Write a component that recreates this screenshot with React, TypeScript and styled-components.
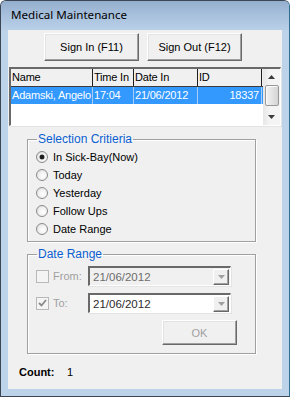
import styled, { createGlobalStyle } from 'styled-components';

const GlobalStyle = createGlobalStyle`
  html, body {
    margin: 0;
    padding: 0;
    background: #ffffff;
  }
  body {
    font-family: 'Liberation Sans', Arial, sans-serif;
    font-size: 11px;
    color: #000;
  }
`;

const WIN = {
  face: '#f0f0f0',
  frame: '#bcd3ea',
  shadow: '#a0a0a0',
  dark: '#696969',
  light: '#ffffff',
  selected: '#3399ff',
  groupText: '#0b5fd0',
  disabled: '#a0a0a0',
};

const Window = styled.div`
  width: 290px;
  height: 397px;
  box-sizing: border-box;
  display: flex;
  flex-direction: column;
  border: 1px solid #3a4654;
  border-right-color: #2f6f8f;
  border-radius: 6px 6px 0 0;
  background: ${WIN.frame};
  overflow: hidden;
`;

const TitleBar = styled.div`
  height: 29px;
  flex: none;
  display: flex;
  align-items: center;
  padding: 0 0 2px 10px;
  box-sizing: border-box;
  background: linear-gradient(180deg, #93aecd 0%, #a6bfdb 45%, #b9d0e8 100%);
  font-family: 'Noto Sans', 'Open Sans', sans-serif;
  font-size: 11.6px;
  color: #000;
`;

const Frame = styled.div`
  flex: 1;
  padding: 0 7px 7px 7px;
  display: flex;
`;

const Client = styled.div`
  flex: 1;
  background: ${WIN.face};
  display: flex;
  flex-direction: column;
`;

const ButtonRow = styled.div`
  display: flex;
  gap: 8px;
  padding: 3px 0 0 36px;
`;

const Button = styled.button<{ $w: number; $h: number; $disabled?: boolean }>`
  width: ${(p) => p.$w}px;
  height: ${(p) => p.$h}px;
  box-sizing: border-box;
  margin: 0;
  padding: 0;
  font-family: 'Liberation Sans', Arial, sans-serif;
  font-size: 11px;
  color: ${(p) => (p.$disabled ? WIN.disabled : '#000')};
  background: ${WIN.face};
  border-style: solid;
  border-width: 1px;
  border-color: ${WIN.light} ${WIN.dark} ${WIN.dark} ${WIN.light};
  box-shadow: inset -1px -1px 0 ${WIN.shadow}, inset 1px 1px 0 #e3e3e3;
  cursor: default;
`;

const List = styled.div`
  margin: 6px 0 0 1px;
  width: 272px;
  height: 59px;
  box-sizing: border-box;
  display: flex;
  background: #fff;
  border-style: solid;
  border-width: 2px 1px 1px 2px;
  border-color: ${WIN.dark} ${WIN.light} ${WIN.light} ${WIN.dark};
  box-shadow: 1px 1px 0 #e3e3e3;
`;

const Grid = styled.div`
  flex: 1;
  display: flex;
  flex-direction: column;
`;

const Row = styled.div<{ $header?: boolean; $selected?: boolean }>`
  display: flex;
  height: 17px;
  background: ${(p) => (p.$header ? WIN.face : p.$selected ? WIN.selected : '#fff')};
  color: ${(p) => (p.$selected ? '#fff' : '#000')};
  border-bottom: ${(p) => (p.$header ? '1px solid #3c3c3c' : 'none')};
`;

const Cell = styled.div<{ $w: number; $header?: boolean; $right?: boolean }>`
  width: ${(p) => p.$w}px;
  box-sizing: border-box;
  padding: ${(p) => (p.$right ? '0 2px 0 0' : '0 0 0 1px')};
  line-height: 17px;
  letter-spacing: -0.2px;
  white-space: nowrap;
  overflow: hidden;
  text-align: ${(p) => (p.$right ? 'right' : 'left')};
  border-right: 1px solid ${(p) => (p.$header ? '#1e1e1e' : '#a9cdf3')};
`;

const ScrollBar = styled.div`
  width: 17px;
  display: flex;
  flex-direction: column;
  align-items: center;
  background: linear-gradient(90deg, #e6e6e6, #f4f4f4 40%, #f4f4f4);
`;

const ScrollArrow = styled.div`
  height: 16px;
  width: 17px;
  display: flex;
  align-items: center;
  justify-content: center;
`;

const ScrollThumb = styled.div`
  width: 14px;
  height: 21px;
  box-sizing: border-box;
  border: 1px solid #979797;
  border-radius: 2px;
  background: linear-gradient(90deg, #f2f2f2, #e4e4e4 50%, #d4d4d4);
  box-shadow: inset 1px 1px 0 #fbfbfb;
`;

const Spacer = styled.div`
  flex: 1;
`;

const Group = styled.fieldset<{ $top: number; $h: number }>`
  margin: ${(p) => p.$top}px 0 0 19px;
  width: 229px;
  height: ${(p) => p.$h}px;
  box-sizing: border-box;
  padding: 0 0 0 8px;
  border: 1px solid #a0a0a0;
  box-shadow: inset 1px 1px 0 #fff, 1px 1px 0 #fff;
  display: flex;
  flex-direction: column;
`;

const Legend = styled.legend`
  padding: 0 1px;
  margin-left: 1px;
  color: ${WIN.groupText};
  font-size: 12px;
  line-height: 13px;
`;

const Options = styled.div`
  display: flex;
  flex-direction: column;
  padding-top: 2px;
`;

const Option = styled.label`
  height: 18px;
  display: flex;
  align-items: center;
  gap: 5px;
`;

const Radio = styled.span<{ $checked?: boolean }>`
  width: 12px;
  height: 12px;
  box-sizing: border-box;
  border-radius: 50%;
  border: 1px solid #8a8a8a;
  background: radial-gradient(circle at 60% 60%, #ffffff 0%, #f0f0f0 50%, #d4d4d4 100%);
  display: flex;
  align-items: center;
  justify-content: center;
  &::after {
    content: '';
    display: ${(p) => (p.$checked ? 'block' : 'none')};
    width: 4px;
    height: 4px;
    border-radius: 50%;
    background: #1a1a1a;
    box-shadow: 0 0 0 0.5px #3a3a3a;
  }
`;

const DateRow = styled.div`
  display: flex;
  align-items: center;
  height: 20px;
`;

const DateRows = styled.div`
  display: flex;
  flex-direction: column;
  gap: 7px;
  padding-top: 5px;
`;

const CheckLabel = styled.span`
  width: 52px;
  display: flex;
  align-items: center;
  gap: 4px;
  color: ${WIN.disabled};
`;

const CheckBox = styled.span`
  width: 13px;
  height: 13px;
  box-sizing: border-box;
  border: 1px solid #b8b8b8;
  background: #f4f4f4;
  display: flex;
  align-items: center;
  justify-content: center;
`;

const Combo = styled.div<{ $enabled?: boolean }>`
  width: 143px;
  height: 20px;
  box-sizing: border-box;
  display: flex;
  align-items: center;
  background: ${(p) => (p.$enabled ? '#fff' : WIN.face)};
  color: ${(p) => (p.$enabled ? '#2b2b2b' : '#6d6d6d')};
  border-style: solid;
  border-width: 2px 1px 1px 2px;
  border-color: ${WIN.dark} ${WIN.light} ${WIN.light} ${WIN.dark};
  box-shadow: 1px 1px 0 #e3e3e3;
`;

const ComboText = styled.span`
  flex: 1;
  padding-left: 3px;
  font-size: 11.5px;
`;

const ComboButton = styled.span`
  width: 16px;
  height: 16px;
  box-sizing: border-box;
  margin-right: 1px;
  display: flex;
  align-items: center;
  justify-content: center;
  background: ${WIN.face};
  border-style: solid;
  border-width: 1px;
  border-color: ${WIN.light} ${WIN.dark} ${WIN.dark} ${WIN.light};
  box-shadow: inset -1px -1px 0 ${WIN.shadow};
`;

const OkRow = styled.div`
  display: flex;
  padding: 7px 0 0 126px;
`;

const CountRow = styled.div`
  display: flex;
  align-items: center;
  padding: 12px 0 0 11px;
`;

const CountLabel = styled.span`
  font-weight: bold;
  width: 48px;
`;

function Arrow({ up, color = '#3b3b3b' }: { up?: boolean; color?: string }) {
  return (
    <svg width="7" height="4" viewBox="0 0 7 4">
      <path d={up ? 'M0 4 L3.5 0 L7 4 Z' : 'M0 0 L7 0 L3.5 4 Z'} fill={color} />
    </svg>
  );
}

const columns = [
  { title: 'Name', w: 82 },
  { title: 'Time In', w: 41 },
  { title: 'Date In', w: 64 },
  { title: 'ID', w: 64 },
];

const row = ['Adamski, Angelo', '17:04', '21/06/2012', '18337'];

const options = ['In Sick-Bay(Now)', 'Today', 'Yesterday', 'Follow Ups', 'Date Range'];

export default function App(): JSX.Element {
  return (
    <>
      <GlobalStyle />
      <Window>
        <TitleBar>Medical Maintenance</TitleBar>
        <Frame>
          <Client>
            <ButtonRow>
              <Button $w={95} $h={28}>Sign In (F11)</Button>
              <Button $w={95} $h={28}>Sign Out (F12)</Button>
            </ButtonRow>

            <List>
              <Grid>
                <Row $header>
                  {columns.map((c) => (
                    <Cell key={c.title} $w={c.w} $header>
                      {c.title}
                    </Cell>
                  ))}
                </Row>
                <Row $selected>
                  {columns.map((c, i) => (
                    <Cell key={c.title} $w={c.w} $right={i === 3}>
                      {row[i]}
                    </Cell>
                  ))}
                </Row>
              </Grid>
              <ScrollBar>
                <ScrollArrow>
                  <Arrow up />
                </ScrollArrow>
                <ScrollThumb />
                <Spacer />
                <ScrollArrow>
                  <Arrow />
                </ScrollArrow>
              </ScrollBar>
            </List>

            <Group $top={7} $h={109}>
              <Legend>Selection Critieria</Legend>
              <Options>
                {options.map((o, i) => (
                  <Option key={o}>
                    <Radio $checked={i === 0} />
                    {o}
                  </Option>
                ))}
              </Options>
            </Group>

            <Group $top={6} $h={106}>
              <Legend>Date Range</Legend>
              <DateRows>
                <DateRow>
                  <CheckLabel>
                    <CheckBox />
                    From:
                  </CheckLabel>
                  <Combo>
                    <ComboText>21/06/2012</ComboText>
                    <ComboButton>
                      <Arrow color="#a0a0a0" />
                    </ComboButton>
                  </Combo>
                </DateRow>
                <DateRow>
                  <CheckLabel>
                    <CheckBox>
                      <svg width="9" height="8" viewBox="0 0 9 8">
                        <path d="M1 4 L3.5 6.5 L8 1" stroke="#8a8a8a" strokeWidth="1.8" fill="none" />
                      </svg>
                    </CheckBox>
                    To:
                  </CheckLabel>
                  <Combo $enabled>
                    <ComboText>21/06/2012</ComboText>
                    <ComboButton>
                      <Arrow color="#a0a0a0" />
                    </ComboButton>
                  </Combo>
                </DateRow>
              </DateRows>
              <OkRow>
                <Button $w={75} $h={25} $disabled>
                  OK
                </Button>
              </OkRow>
            </Group>

            <CountRow>
              <CountLabel>Count:</CountLabel>
              <span>1</span>
            </CountRow>
          </Client>
        </Frame>
      </Window>
    </>
  );
}
